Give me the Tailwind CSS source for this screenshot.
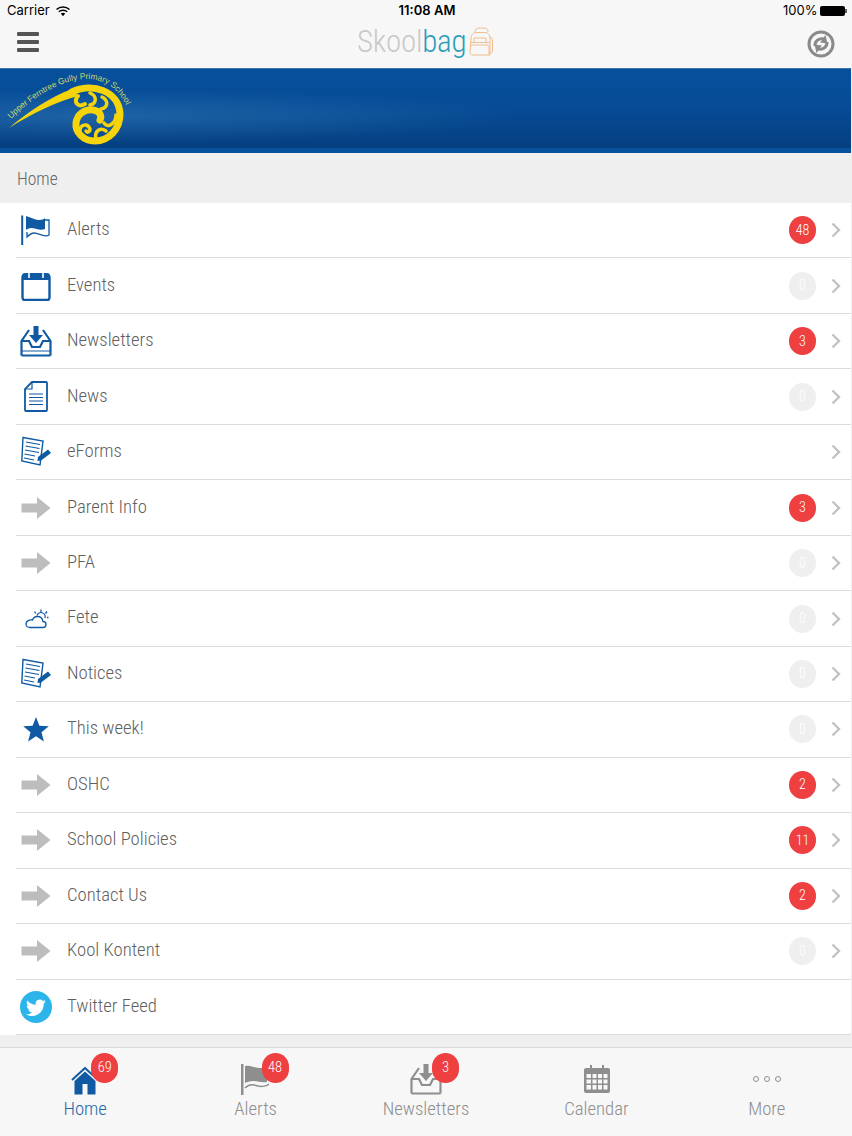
<!DOCTYPE html>
<html>
  <head>
    <meta charset="UTF-8" />
    <script src="https://cdn.jsdelivr.net/npm/@tailwindcss/browser@4"></script>
  </head>
  <body>
    <!-- shared icons -->
    <svg class="hidden" xmlns="http://www.w3.org/2000/svg">
      <symbol id="i-arrow" viewBox="0 0 30 24">
        <path d="M0.5 7.5H16V1l13.5 11L16 23v-6.5H0.5z" fill="#bdbdbd" />
      </symbol>
      <symbol id="i-form" viewBox="0 0 32 32">
        <path d="M2 1.5 22 5 19 29 0.8 25z" fill="#fff" stroke="#0f5aa3" stroke-width="1.4" />
        <path d="M5 6l14 2.500M4.500 10l14 2.500M4 14l14 2.500M3.500 18l10.500 2M3 22l10 2" stroke="#0f5aa3" stroke-width="1.2" />
        <path d="M17 21 27 13.500l3 3.500-10 7.500-3.500.5z" fill="#0f5aa3" />
      </symbol>
      <symbol id="i-chev" viewBox="0 0 10 16">
        <path d="M1.5 1.5 8 8l-6.5 6.5" fill="none" stroke="#c2c2c2" stroke-width="2.4" />
      </symbol>
    </svg>

    <div class="w-[852px] h-[1136px] flex flex-col overflow-hidden bg-[#efefef] font-['Roboto',sans-serif]">
      <!-- status bar -->
      <div class="h-[22px] shrink-0 bg-[#f7f7f8] flex items-center justify-between pl-[7px] pr-[5px] text-[13px] text-black font-['Inter',sans-serif]">
        <div class="flex items-center gap-[6px] w-[200px]">
          <span>Carrier</span>
          <svg class="w-[14px] h-[11px]" viewBox="0 0 14 11">
            <path d="M0.5 3.5a9.500 9.500 0 0 1 13 0" fill="none" stroke="#000" stroke-width="1.5" />
            <path d="M2.800 5.800a6.200 6.200 0 0 1 8.400 0" fill="none" stroke="#000" stroke-width="1.5" />
            <path d="M4.800 7.600a3.400 3.400 0 0 1 4.400 0L7 10.200z" fill="#000" />
          </svg>
        </div>
        <div class="font-semibold">11:08 AM</div>
        <div class="flex items-center justify-end gap-[3px] w-[200px]">
          <span>100%</span>
          <span class="flex items-center">
            <span class="w-[25px] h-[10px] rounded-[2px] bg-black"></span>
            <span class="w-[1.5px] h-[4px] bg-black/60"></span>
          </span>
        </div>
      </div>

      <!-- nav bar -->
      <div class="h-[46px] shrink-0 bg-[#f7f7f8] relative flex items-center justify-between pl-[17px] pr-[17px]">
        <div class="flex flex-col gap-[4px] -mt-[6px]">
          <span class="block w-[22px] h-[4px] rounded-[1px] bg-[#555]"></span>
          <span class="block w-[22px] h-[4px] rounded-[1px] bg-[#555]"></span>
          <span class="block w-[22px] h-[4px] rounded-[1px] bg-[#555]"></span>
        </div>
        <div class="absolute left-[357px] top-[1px] flex items-center">
          <span class="text-[31px] leading-[38px] font-light text-[#c9c9c9] tracking-[-0.25px] [font-stretch:75%]">Skool</span><span class="text-[31px] leading-[38px] font-light text-[#2a9db8] tracking-[-0.25px] [font-stretch:75%]">bag</span>
          <svg class="w-[25px] h-[30px] ml-[2px]" viewBox="0 0 25 30" fill="none" stroke="#f0bd8e" stroke-width="1">
            <path d="M7 5C7 2 9 1 12 1h4c3 0 4 2 4 4" />
            <path d="M3 12c0-4 2-6.500 5-6.500h9c3 0 5 2.500 5 6.500v16H5c-1.500 0-3-1-3-2.500z" />
            <path d="M3 15.500h18M6 15.500V11h12v4.500" />
            <path d="M3 19.500c0-1 1-1.500 2-1.500h14c1.500 0 2 .5 2 1.500V28" />
            <path d="M22 10c2 0 2.500 2 2.500 4v9c0 2-1 3-2.500 3" />
          </svg>
        </div>
        <svg class="w-[28px] h-[28px] -mt-[2px]" viewBox="0 0 28 28">
          <circle cx="14" cy="14" r="12" fill="none" stroke="#8a8a8a" stroke-width="3" />
          <path d="M6.500 16C6 10.500 11 6.500 16.500 7.500L18.500 5l2 8.500-7.500-1 2-2.200C12 10 9.500 12.500 9.500 16z" fill="#8a8a8a" />
          <path d="M21.500 12C22 17.500 17 21.500 11.500 20.500L9.500 23l-2-8.500 7.500 1-2 2.200c3 .3 5.500-2.200 5.500-5.700z" fill="#8a8a8a" />
        </svg>
      </div>

      <!-- school banner -->
      <div class="h-[85px] shrink-0 w-[851px] relative border-t border-[#3a77b0] border-b-[5px] border-b-[#07509c] bg-[linear-gradient(180deg,#07509c_0%,#064c96_45%,#053f80_100%)]">
        <div class="absolute inset-0 bg-[radial-gradient(ellipse_at_12%_60%,rgba(60,130,190,0.45),transparent_40%)]"></div>
        <svg class="absolute left-0 top-0 w-[140px] h-[80px]" viewBox="0 0 140 80">
          <defs>
            <path id="logo-arc" d="M11 50C33 28 62 10 86 10 110 10 126 26 131 52" />
          </defs>
          <text font-family="Liberation Sans, sans-serif" font-size="8.4" fill="#c9d96a"><textPath href="#logo-arc">Upper Ferntree Gully Primary School</textPath></text>
          <path d="M9 59C28 43 50 28 72 20l6 7C56 33 31 45 9 59z" fill="#f5d40c" />
          <g fill="none" stroke="#f5d40c" stroke-linecap="round">
            <path d="M72 23C92 13 119 22 120 45 120 60 109 72 95 72 83 72 75 63 76 54 77 45 85 40 93 41 100 42 102 47 100 51" stroke-width="7" />
            <path d="M78 27C73 33 78 39 85 35" stroke-width="4" />
            <path d="M90 24C97 27 97 34 90 36" stroke-width="3.500" />
            <path d="M102 28C108 31 109 38 101 40" stroke-width="3.500" />
            <path d="M116 46C116 54 108 60 104 54" stroke-width="3.500" />
            <path d="M106 62C100 58 94 62 96 70" stroke-width="3.500" />
            <path d="M80 62C80 55 88 54 90 60 90 63 87 64 86 62" stroke-width="3.500" />
          </g>
        </svg>
      </div>

      <!-- breadcrumb -->
      <div class="h-[50px] shrink-0 flex items-center pl-[17px] pt-[3px] text-[17.5px] font-light text-[#666] [font-stretch:75%]">Home</div>

      <!-- menu -->
      <ul class="w-[851px] bg-white text-[18.7px] font-light text-[#5f5f5f] [font-stretch:75%] [&_.grow]:-mt-[2px]">
        <li class="h-[55.47px] ml-4 flex items-center border-b border-[#dcdcdc]">
          <span class="w-[51px] shrink-0 flex">
            <svg class="w-[32px] h-[32px] ml-[4px]" viewBox="0 0 32 32">
              <path d="M1.2 1.5h2V31h-2z" fill="#0f5aa3" />
              <path d="M6 2c6 2 10 4 13 4 3 0 5-1 6-2v11c-5 2-10-1-14-1-2 0-4 1-5 2z" fill="#0f5aa3" />
              <path d="M25 6h4v15c-5 3-10-2-15-2-3 0-5 2-7 4v-5" fill="none" stroke="#0f5aa3" stroke-width="1.3" />
            </svg>
          </span>
          <span class="grow">Alerts</span>
          <span class="w-[27px] h-[28px] rounded-full bg-[#ee4040] text-white text-[14px] flex items-center justify-center">48</span>
          <svg class="w-[10px] h-[16px] ml-[15px] mr-[10px]" viewBox="0 0 10 16"><use href="#i-chev" /></svg>
        </li>
        <li class="h-[55.47px] ml-4 flex items-center border-b border-[#dcdcdc]">
          <span class="w-[51px] shrink-0 flex">
            <svg class="w-[30px] h-[30px] ml-[5px]" viewBox="0 0 30 30">
              <rect x="1.500" y="4" width="27" height="25" rx="2.500" fill="#fff" stroke="#0f5aa3" stroke-width="2.400" />
              <path d="M1 9V5a3 3 0 0 1 3-3h22a3 3 0 0 1 3 3v4z" fill="#0f5aa3" />
              <path d="M8 1v6M22 1v6" stroke="#fff" stroke-width="1.600" />
            </svg>
          </span>
          <span class="grow">Events</span>
          <span class="w-[27px] h-[28px] rounded-full bg-[#efeff0] text-white text-[14px] flex items-center justify-center">0</span>
          <svg class="w-[10px] h-[16px] ml-[15px] mr-[10px]" viewBox="0 0 10 16"><use href="#i-chev" /></svg>
        </li>
        <li class="h-[55.47px] ml-4 flex items-center border-b border-[#dcdcdc]">
          <span class="w-[51px] shrink-0 flex">
            <svg class="w-[32px] h-[32px] ml-[4px]" viewBox="0 0 32 32" fill="none">
              <path d="M1.500 30.500V16L9 5M30.500 30.500V16L23 5M1.500 30.500h29" stroke="#0f5aa3" stroke-width="2.200" />
              <path d="M2 16h7l3 6h8l3-6h7" stroke="#0f5aa3" stroke-width="2.200" />
              <path d="M13.500 1h5v9h4.500L16 18 9 10h4.500z" fill="#0f5aa3" />
              <path d="M1.500 26h29" stroke="#0f5aa3" stroke-width="1" />
            </svg>
          </span>
          <span class="grow">Newsletters</span>
          <span class="w-[27px] h-[28px] rounded-full bg-[#ee4040] text-white text-[14px] flex items-center justify-center">3</span>
          <svg class="w-[10px] h-[16px] ml-[15px] mr-[10px]" viewBox="0 0 10 16"><use href="#i-chev" /></svg>
        </li>
        <li class="h-[55.47px] ml-4 flex items-center border-b border-[#dcdcdc]">
          <span class="w-[51px] shrink-0 flex">
            <svg class="w-[24px] h-[31px] ml-[8px]" viewBox="0 0 24 31" fill="none" stroke="#0f5aa3">
              <path d="M8 1h14a1 1 0 0 1 1 1v27a1 1 0 0 1-1 1H2a1 1 0 0 1-1-1V8z" stroke-width="1.800" />
              <path d="M8 1v7H1" stroke-width="1.200" />
              <path d="M5 13h14M5 16.500h14M5 20h14M5 23.500h14" stroke-width="1.100" />
            </svg>
          </span>
          <span class="grow">News</span>
          <span class="w-[27px] h-[28px] rounded-full bg-[#efeff0] text-white text-[14px] flex items-center justify-center">0</span>
          <svg class="w-[10px] h-[16px] ml-[15px] mr-[10px]" viewBox="0 0 10 16"><use href="#i-chev" /></svg>
        </li>
        <li class="h-[55.47px] ml-4 flex items-center border-b border-[#dcdcdc]">
          <span class="w-[51px] shrink-0 flex"><svg class="w-[32px] h-[32px] ml-[5px]" viewBox="0 0 32 32"><use href="#i-form" /></svg></span>
          <span class="grow">eForms</span>
          <svg class="w-[10px] h-[16px] ml-[15px] mr-[10px]" viewBox="0 0 10 16"><use href="#i-chev" /></svg>
        </li>
        <li class="h-[55.47px] ml-4 flex items-center border-b border-[#dcdcdc]">
          <span class="w-[51px] shrink-0 flex"><svg class="w-[30px] h-[24px] ml-[5px]" viewBox="0 0 30 24"><use href="#i-arrow" /></svg></span>
          <span class="grow">Parent Info</span>
          <span class="w-[27px] h-[28px] rounded-full bg-[#ee4040] text-white text-[14px] flex items-center justify-center">3</span>
          <svg class="w-[10px] h-[16px] ml-[15px] mr-[10px]" viewBox="0 0 10 16"><use href="#i-chev" /></svg>
        </li>
        <li class="h-[55.47px] ml-4 flex items-center border-b border-[#dcdcdc]">
          <span class="w-[51px] shrink-0 flex"><svg class="w-[30px] h-[24px] ml-[5px]" viewBox="0 0 30 24"><use href="#i-arrow" /></svg></span>
          <span class="grow">PFA</span>
          <span class="w-[27px] h-[28px] rounded-full bg-[#efeff0] text-white text-[14px] flex items-center justify-center">0</span>
          <svg class="w-[10px] h-[16px] ml-[15px] mr-[10px]" viewBox="0 0 10 16"><use href="#i-chev" /></svg>
        </li>
        <li class="h-[55.47px] ml-4 flex items-center border-b border-[#dcdcdc]">
          <span class="w-[51px] shrink-0 flex">
            <svg class="w-[24px] h-[20px] ml-[9px]" viewBox="0 0 24 20" fill="none" stroke="#0f5aa3" stroke-width="1.300">
              <path d="M5 18.500h13c2 0 3-1.500 3-3s-1-3-3-3c-.5-3-2.500-5-5.500-5S8 9.500 7.500 11C3.500 10.500 1 12.500 1 15c0 2 1.800 3.500 4 3.500z" />
              <path d="M12 6.500a4 4 0 0 1 8 2.500M16 .5v2.500M9.500 2.500l1.300 2M22 2.500l-1.500 2M23.500 8.500H22" />
            </svg>
          </span>
          <span class="grow">Fete</span>
          <span class="w-[27px] h-[28px] rounded-full bg-[#efeff0] text-white text-[14px] flex items-center justify-center">0</span>
          <svg class="w-[10px] h-[16px] ml-[15px] mr-[10px]" viewBox="0 0 10 16"><use href="#i-chev" /></svg>
        </li>
        <li class="h-[55.47px] ml-4 flex items-center border-b border-[#dcdcdc]">
          <span class="w-[51px] shrink-0 flex"><svg class="w-[32px] h-[32px] ml-[5px]" viewBox="0 0 32 32"><use href="#i-form" /></svg></span>
          <span class="grow">Notices</span>
          <span class="w-[27px] h-[28px] rounded-full bg-[#efeff0] text-white text-[14px] flex items-center justify-center">0</span>
          <svg class="w-[10px] h-[16px] ml-[15px] mr-[10px]" viewBox="0 0 10 16"><use href="#i-chev" /></svg>
        </li>
        <li class="h-[55.47px] ml-4 flex items-center border-b border-[#dcdcdc]">
          <span class="w-[51px] shrink-0 flex">
            <svg class="w-[26px] h-[25px] ml-[7px]" viewBox="0 0 26 25"><path d="M13 0l3.400 8.800 9.400.5-7.300 6 2.400 9.200L13 19.300 5.100 24.500l2.400-9.200-7.300-6 9.400-.5z" fill="#0f5aa3" /></svg>
          </span>
          <span class="grow">This week!</span>
          <span class="w-[27px] h-[28px] rounded-full bg-[#efeff0] text-white text-[14px] flex items-center justify-center">0</span>
          <svg class="w-[10px] h-[16px] ml-[15px] mr-[10px]" viewBox="0 0 10 16"><use href="#i-chev" /></svg>
        </li>
        <li class="h-[55.47px] ml-4 flex items-center border-b border-[#dcdcdc]">
          <span class="w-[51px] shrink-0 flex"><svg class="w-[30px] h-[24px] ml-[5px]" viewBox="0 0 30 24"><use href="#i-arrow" /></svg></span>
          <span class="grow">OSHC</span>
          <span class="w-[27px] h-[28px] rounded-full bg-[#ee4040] text-white text-[14px] flex items-center justify-center">2</span>
          <svg class="w-[10px] h-[16px] ml-[15px] mr-[10px]" viewBox="0 0 10 16"><use href="#i-chev" /></svg>
        </li>
        <li class="h-[55.47px] ml-4 flex items-center border-b border-[#dcdcdc]">
          <span class="w-[51px] shrink-0 flex"><svg class="w-[30px] h-[24px] ml-[5px]" viewBox="0 0 30 24"><use href="#i-arrow" /></svg></span>
          <span class="grow">School Policies</span>
          <span class="w-[27px] h-[28px] rounded-full bg-[#ee4040] text-white text-[14px] flex items-center justify-center">11</span>
          <svg class="w-[10px] h-[16px] ml-[15px] mr-[10px]" viewBox="0 0 10 16"><use href="#i-chev" /></svg>
        </li>
        <li class="h-[55.47px] ml-4 flex items-center border-b border-[#dcdcdc]">
          <span class="w-[51px] shrink-0 flex"><svg class="w-[30px] h-[24px] ml-[5px]" viewBox="0 0 30 24"><use href="#i-arrow" /></svg></span>
          <span class="grow">Contact Us</span>
          <span class="w-[27px] h-[28px] rounded-full bg-[#ee4040] text-white text-[14px] flex items-center justify-center">2</span>
          <svg class="w-[10px] h-[16px] ml-[15px] mr-[10px]" viewBox="0 0 10 16"><use href="#i-chev" /></svg>
        </li>
        <li class="h-[55.47px] ml-4 flex items-center border-b border-[#dcdcdc]">
          <span class="w-[51px] shrink-0 flex"><svg class="w-[30px] h-[24px] ml-[5px]" viewBox="0 0 30 24"><use href="#i-arrow" /></svg></span>
          <span class="grow">Kool Kontent</span>
          <span class="w-[27px] h-[28px] rounded-full bg-[#efeff0] text-white text-[14px] flex items-center justify-center">0</span>
          <svg class="w-[10px] h-[16px] ml-[15px] mr-[10px]" viewBox="0 0 10 16"><use href="#i-chev" /></svg>
        </li>
        <li class="h-[55.47px] ml-4 flex items-center border-b border-[#dcdcdc]">
          <span class="w-[51px] shrink-0 flex">
            <svg class="w-[32px] h-[32px] ml-[4px]" viewBox="0 0 32 32">
              <circle cx="16" cy="16" r="16" fill="#2cb5ea" />
              <path d="M26 10.500c-.8.4-1.600.6-2.400.7.900-.5 1.500-1.300 1.800-2.300-.8.500-1.700.8-2.600 1a4.100 4.100 0 0 0-7 3.800c-3.400-.2-6.400-1.800-8.500-4.300-1.100 1.900-.5 4.300 1.300 5.500-.7 0-1.300-.2-1.900-.5 0 2 1.400 3.700 3.300 4.100-.6.200-1.200.2-1.900.1.500 1.600 2 2.800 3.800 2.800-1.800 1.400-4 2-6.100 1.800 1.900 1.200 4 1.800 6.300 1.800 7.600 0 11.900-6.400 11.600-12.200.8-.6 1.500-1.300 2.300-2.300z" fill="#fff" />
            </svg>
          </span>
          <span class="grow">Twitter Feed</span>
        </li>
      </ul>

      <!-- tab bar -->
      <div class="mt-auto h-[89px] shrink-0 border-t border-[#d9d9d9] bg-[#f7f7f8] grid grid-cols-5 text-[18.7px] font-light text-[#8e8e8e] [font-stretch:75%]">
        <div class="flex flex-col items-center pt-[15px] text-[#2467a8]">
          <span class="relative h-[32px] flex items-end">
            <svg class="w-[28px] h-[28px]" viewBox="0 0 28 28">
              <path d="M1 13 14 1l13 12" fill="none" stroke="#0f5aa3" stroke-width="2" />
              <path d="M3.500 14 14 4.500 24.500 14v13.500h-8V17h-5v10.500h-8z" fill="#0f5aa3" />
            </svg>
            <span class="absolute left-[20px] -top-[10px] w-[27px] h-[30px] rounded-full bg-[#ee4040] text-white text-[14.5px] flex items-center justify-center">69</span>
          </span>
          <span class="leading-[22px] mt-[3px]">Home</span>
        </div>
        <div class="flex flex-col items-center pt-[15px]">
          <span class="relative h-[32px] flex items-end">
            <svg class="w-[32px] h-[32px]" viewBox="0 0 32 32">
              <path d="M1 1h2.500v31H1z" fill="#8e8e8e" />
              <path d="M5 3c6-1 9 2 14 2s8-1 8-1v15c-6 1-9-1-14-1-3 0-6 1-8 2z" fill="#8e8e8e" />
              <path d="M5 25c4-4 8-4 13-2 4 1 9 0 11-2" fill="none" stroke="#8e8e8e" stroke-width="1.5" />
            </svg>
            <span class="absolute left-[22px] -top-[10px] w-[27px] h-[30px] rounded-full bg-[#ee4040] text-white text-[14.5px] flex items-center justify-center">48</span>
          </span>
          <span class="leading-[22px] mt-[3px]">Alerts</span>
        </div>
        <div class="flex flex-col items-center pt-[15px]">
          <span class="relative h-[32px] flex items-end">
            <svg class="w-[32px] h-[32px]" viewBox="0 0 32 32" fill="none">
              <path d="M1.500 30.500V16L9 5M30.500 30.500V16M1.500 30.500h29" stroke="#8e8e8e" stroke-width="2.200" />
              <path d="M2 16h7l3 6h8l3-6h7" stroke="#8e8e8e" stroke-width="2.200" />
              <path d="M13.500 1h5v9h4.500L16 18 9 10h4.500z" fill="#8e8e8e" />
            </svg>
            <span class="absolute left-[22px] -top-[10px] w-[27px] h-[30px] rounded-full bg-[#ee4040] text-white text-[14.5px] flex items-center justify-center">3</span>
          </span>
          <span class="leading-[22px] mt-[3px]">Newsletters</span>
        </div>
        <div class="flex flex-col items-center pt-[15px]">
          <span class="h-[32px] flex items-start pt-[1px] pl-[2px]">
            <svg class="w-[28px] h-[29px]" viewBox="0 0 28 29">
              <path d="M1 6a2 2 0 0 1 2-2h4V1h2v3h10V1h2v3h4a2 2 0 0 1 2 2v21a2 2 0 0 1-2 2H3a2 2 0 0 1-2-2z" fill="#8e8e8e" />
              <path d="M3.500 10h4.500v4H3.500zM9.500 10h4v4h-4zM15 10h4v4h-4zM20.500 10h4v4h-4zM3.500 15.500h4.500v4H3.500zM9.500 15.500h4v4h-4zM15 15.500h4v4h-4zM20.500 15.500h4v4h-4zM3.500 21h4.500v4.500H3.500zM9.500 21h4v4.500h-4zM15 21h4v4.500h-4zM20.500 21h4v4.500h-4z" fill="#f7f7f8" />
            </svg>
          </span>
          <span class="leading-[22px] mt-[3px]">Calendar</span>
        </div>
        <div class="flex flex-col items-center pt-[15px]">
          <span class="h-[32px] flex items-center">
            <svg class="w-[30px] h-[8px]" viewBox="0 0 30 8" fill="none" stroke="#8e8e8e" stroke-width="1">
              <circle cx="4" cy="4" r="2.500" /><circle cx="15" cy="4" r="2.500" /><circle cx="26" cy="4" r="2.500" />
            </svg>
          </span>
          <span class="leading-[22px] mt-[3px]">More</span>
        </div>
      </div>
    </div>
  </body>
</html>
